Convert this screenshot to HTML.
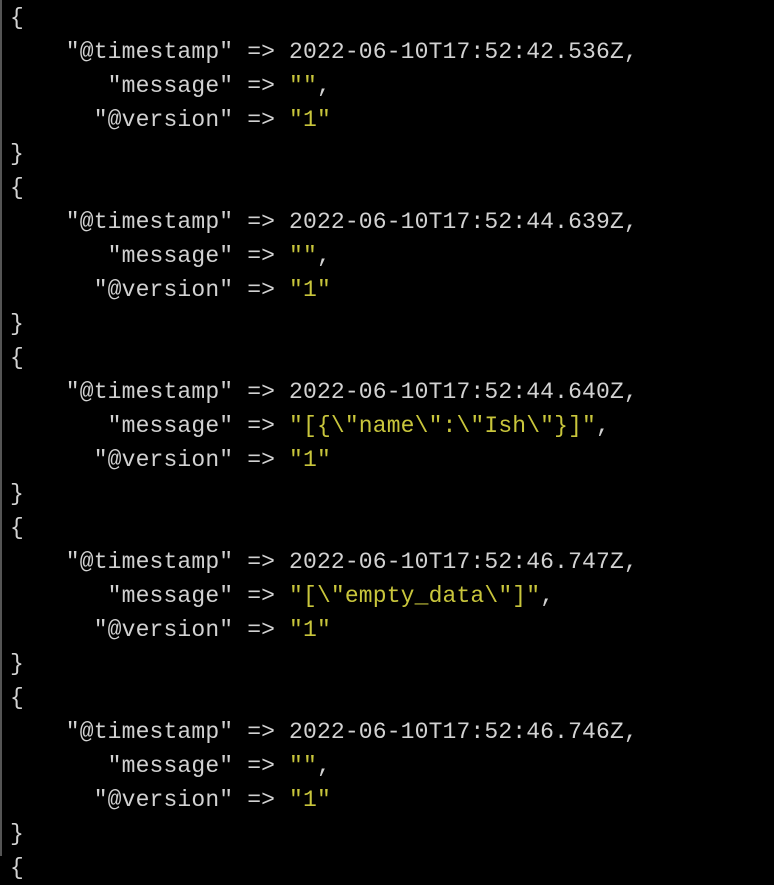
<!DOCTYPE html>
<html><head><style>
html,body{margin:0;padding:0;background:#000;width:774px;height:856px;overflow:hidden}
.b{position:absolute;left:0;top:0;width:2px;height:856px;background:#555}
pre{margin:0;position:absolute;left:10px;top:1px;font-family:"Liberation Mono",monospace;font-size:23px;line-height:34px;color:#d2d2d2;letter-spacing:0.15px}
.y{color:#c9c63c}
</style></head><body><div class="b"></div><pre>{
    "@timestamp" =&gt; 2022-06-10T17:52:42.536Z,
       "message" =&gt; <span class="y">""</span>,
      "@version" =&gt; <span class="y">"1"</span>
}
{
    "@timestamp" =&gt; 2022-06-10T17:52:44.639Z,
       "message" =&gt; <span class="y">""</span>,
      "@version" =&gt; <span class="y">"1"</span>
}
{
    "@timestamp" =&gt; 2022-06-10T17:52:44.640Z,
       "message" =&gt; <span class="y">"[{\"name\":\"Ish\"}]"</span>,
      "@version" =&gt; <span class="y">"1"</span>
}
{
    "@timestamp" =&gt; 2022-06-10T17:52:46.747Z,
       "message" =&gt; <span class="y">"[\"empty_data\"]"</span>,
      "@version" =&gt; <span class="y">"1"</span>
}
{
    "@timestamp" =&gt; 2022-06-10T17:52:46.746Z,
       "message" =&gt; <span class="y">""</span>,
      "@version" =&gt; <span class="y">"1"</span>
}
{</pre></body></html>
